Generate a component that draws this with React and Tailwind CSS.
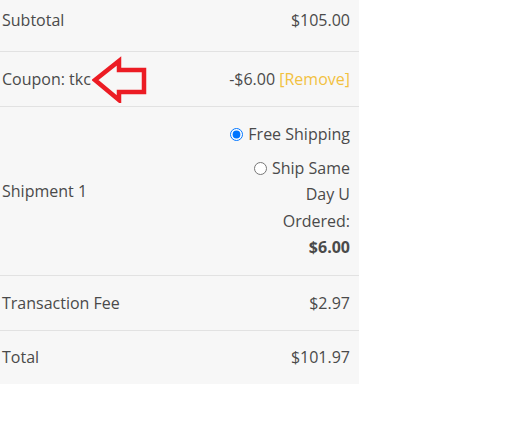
import React from "react";

function Row({ label, children, className = "" }) {
  return (
    <div className={`flex items-center justify-between pl-[2px] pr-[9px] border-b border-[#e2e2e2] ${className}`}>
      <div>{label}</div>
      <div className="text-right">{children}</div>
    </div>
  );
}

export default function App() {
  return (
    <div className="w-[520px] h-[436px] bg-white" style={{ fontFamily: '"Open Sans", sans-serif' }}>
      <div className="w-[359px] bg-[#f7f7f7] text-[16px] leading-[24px] text-[#4a4a4a]">
        <Row label="Subtotal" className="pt-[8px] pb-[19px]">$105.00</Row>
        <Row
          label={
            <div className="flex items-center">
              <span>Coupon: tkc</span>
              <svg width="56" height="48" viewBox="0 0 56 48" className="ml-[1px]">
                <polygon
                  points="3,25 27,6 27,15 52,15 52,37 27,37 27,45"
                  fill="none"
                  stroke="#ec1c24"
                  strokeWidth="4.5"
                  strokeLinejoin="miter"
                />
              </svg>
            </div>
          }
          className="h-[55px]"
        >
          -$6.00 <span className="text-[#f2c13f]">[Remove]</span>
        </Row>
        <Row label="Shipment 1" className="py-[14px]">
          <div className="flex flex-col items-end gap-[7px] leading-[26.5px]">
            <label className="flex items-center">
              <input type="radio" name="ship" defaultChecked className="mr-[5px] w-[13px] h-[13px]" />
              Free Shipping
            </label>
            <label className="block text-right">
              <input type="radio" name="ship" className="mr-[5px] w-[13px] h-[13px] align-[-1px]" />
              Ship Same
              <br />
              Day U
              <br />
              Ordered:
              <br />
              <b className="font-bold">$6.00</b>
            </label>
          </div>
        </Row>
        <Row label="Transaction Fee" className="h-[55px]">$2.97</Row>
        <div className="flex items-center justify-between pl-[2px] pr-[9px] h-[53px] pb-[1px]">
          <div>Total</div>
          <div>$101.97</div>
        </div>
      </div>
    </div>
  );
}
